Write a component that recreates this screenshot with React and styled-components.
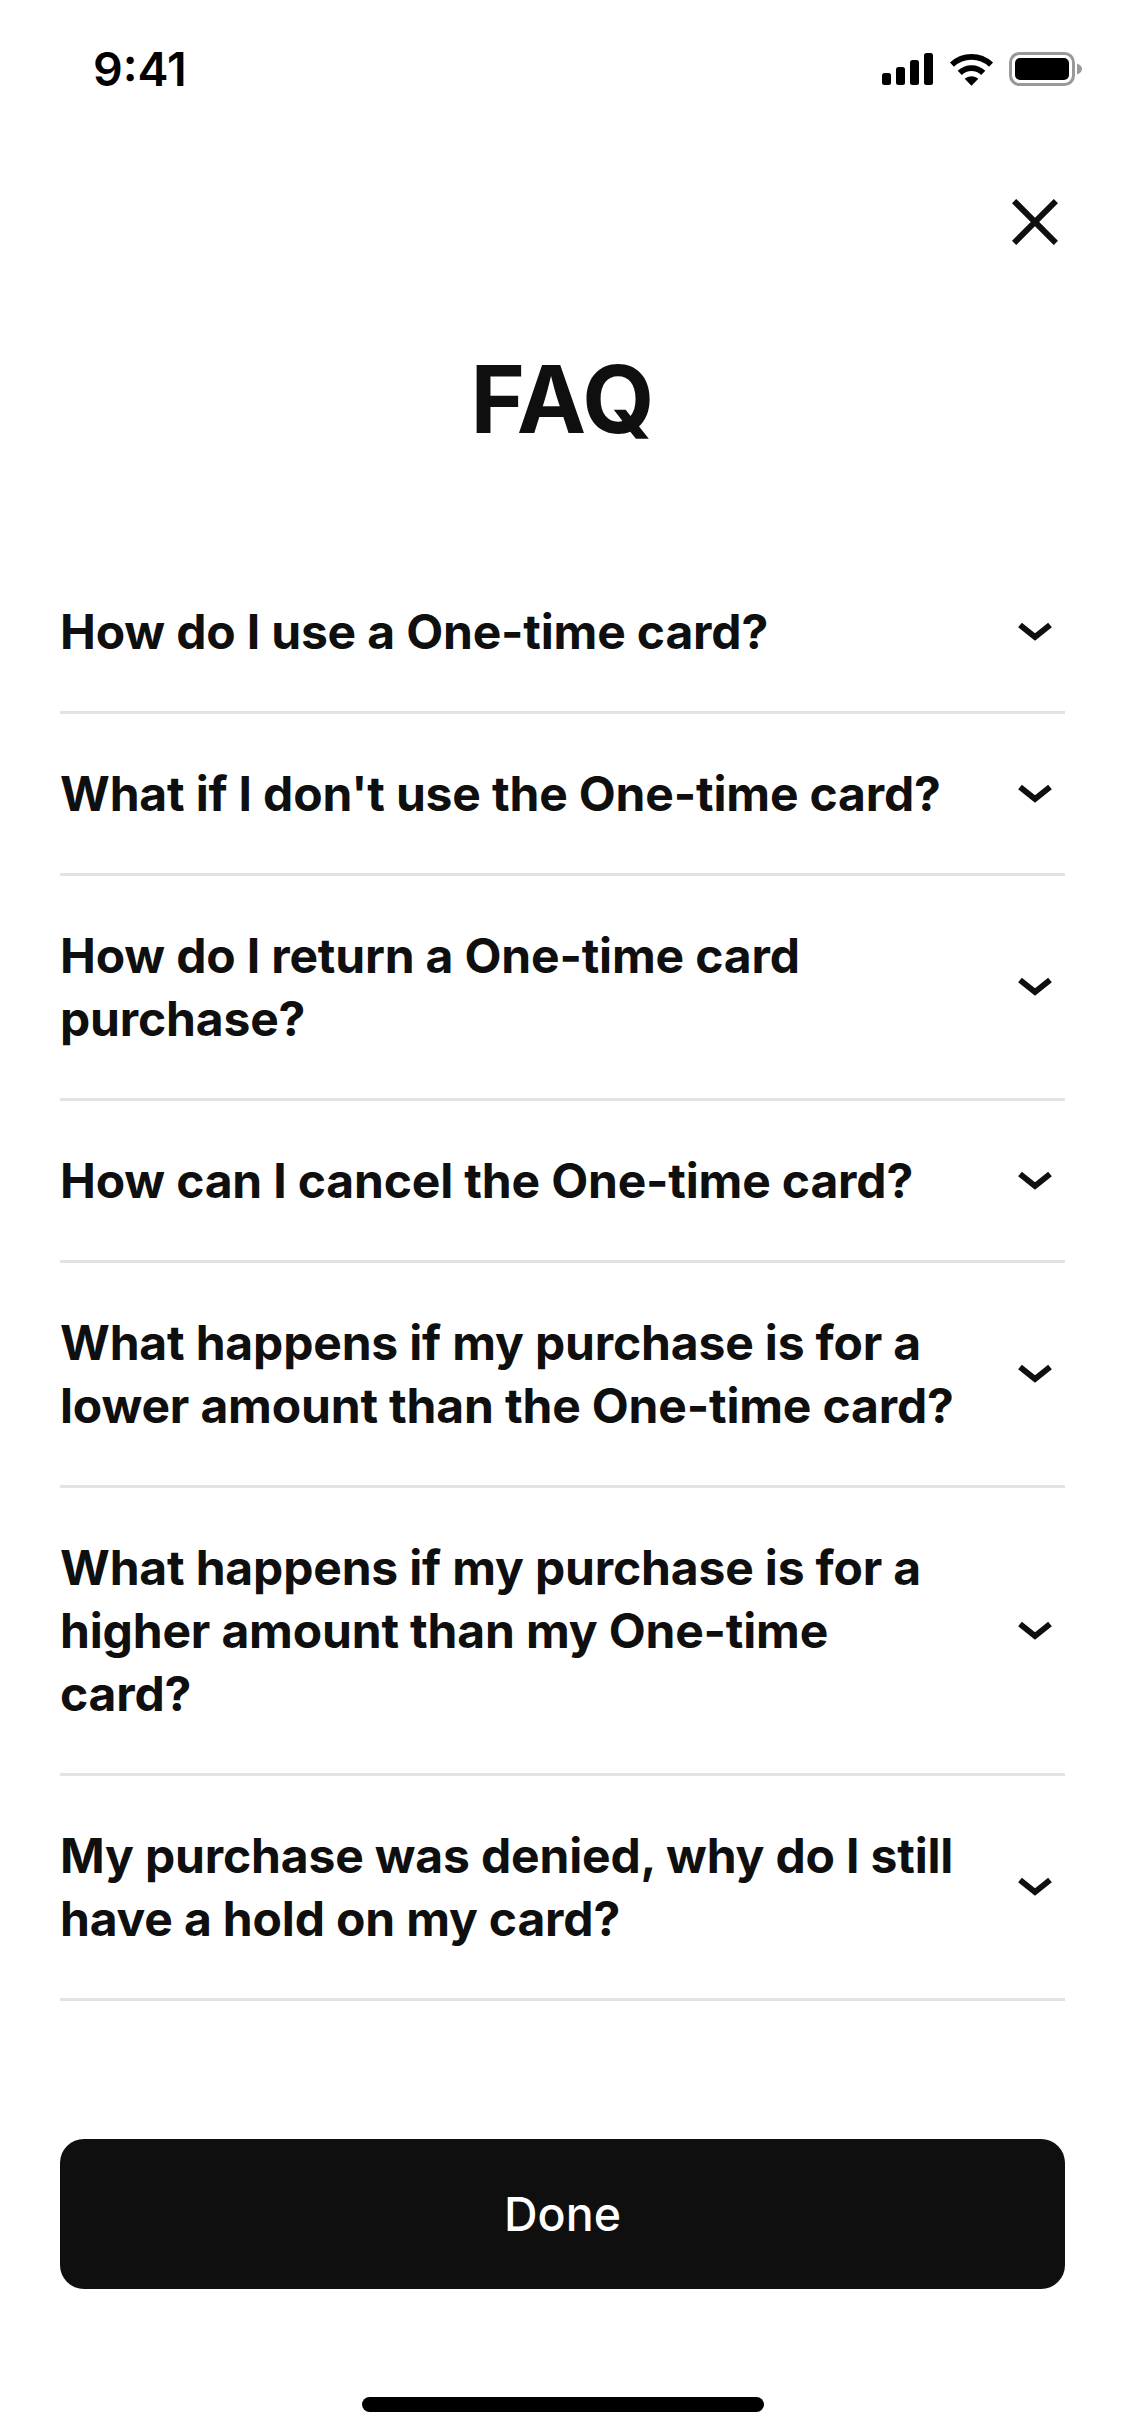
import React from "react";
import styled, { createGlobalStyle } from "styled-components";

const Global = createGlobalStyle`
  html, body { margin: 0; padding: 0; background: #fff; }
  * { box-sizing: border-box; }
`;

const Screen = styled.div`
  width: 1125px;
  height: 2436px;
  display: flex;
  flex-direction: column;
  background: #fff;
  color: #0f0f0f;
  font-family: Inter, "Liberation Sans", sans-serif;
  overflow: hidden;
`;

const StatusBar = styled.div`
  height: 132px;
  padding: 49px 43px 0 93px;
  display: flex;
  justify-content: space-between;
  align-items: flex-start;
`;

const Time = styled.span`
  font-size: 46.5px;
  line-height: 40px;
  font-weight: 600;
  color: #000;
`;

const StatusIcons = styled.div`
  display: flex;
  align-items: center;
  gap: 15.5px;
  height: 40px;
`;

const CloseRow = styled.div`
  display: flex;
  justify-content: flex-end;
  padding: 67px 67px 0 0;
`;

const Title = styled.h1`
  margin: 96px 0 0;
  text-align: center;
  font-size: 93px;
  line-height: 116px;
  font-weight: 700;
  color: #0f0f0f;
`;

const List = styled.div`
  margin: 95px 60px 0;
  display: flex;
  flex-direction: column;
`;

const Row = styled.div`
  display: flex;
  align-items: center;
  justify-content: space-between;
  padding: 48px 0;
  border-bottom: 3px solid #e3e3e3;
`;

const Question = styled.span`
  width: 900px;
  font-size: 48px;
  line-height: 63px;
  font-weight: 650;
  letter-spacing: -0.17px;
  color: #0f0f0f;
`;

const ChevronBox = styled.span`
  display: flex;
  margin-right: 13px;
`;

const DoneButton = styled.button`
  margin: 138px 60px 0;
  height: 150px;
  border: 0;
  border-radius: 24px;
  background: #0f0f0f;
  color: #fff;
  font-family: inherit;
  font-size: 46.5px;
  font-weight: 450;
`;

const HomeBar = styled.div`
  width: 402px;
  height: 15px;
  margin: 108px auto 0;
  border-radius: 8px;
  background: #000;
`;

const questions = [
  "How do I use a One-time card?",
  "What if I don't use the One-time card?",
  "How do I return a One-time card purchase?",
  "How can I cancel the One-time card?",
  "What happens if my purchase is for a lower amount than the One-time card?",
  "What happens if my purchase is for a higher amount than my One-time card?",
  "My purchase was denied, why do I still have a hold on my card?",
];

const Signal = () => (
  <svg width="51" height="32" viewBox="0 0 51 32" fill="#000">
    <rect x="0" y="20" width="9" height="12" rx="2.5" />
    <rect x="14" y="14" width="9" height="18" rx="2.5" />
    <rect x="28" y="7" width="9" height="25" rx="2.5" />
    <rect x="42" y="0" width="9" height="32" rx="2.5" />
  </svg>
);

const Wifi = () => (
  <svg width="45" height="33" viewBox="0 0 46 33" fill="none" stroke="#000">
    <path d="M3 11.5C14.5 1 31.5 1 43 11.5" strokeWidth="6" />
    <path d="M11 20C17.5 13.5 28.5 13.5 35 20" strokeWidth="6" />
    <path d="M16 26 23 33 30 26C26 22.5 20 22.5 16 26Z" fill="#000" stroke="none" />
  </svg>
);

const Battery = () => (
  <svg width="73" height="34" viewBox="0 0 73 34">
    <rect x="1.5" y="1.5" width="63" height="31" rx="9" fill="none" stroke="#999" strokeWidth="3" />
    <rect x="6" y="6" width="54" height="22" rx="5" fill="#000" />
    <path d="M68 11.5C71 12.5 73 14.5 73 17S71 21.5 68 22.5Z" fill="#999" />
  </svg>
);

const CloseIcon = () => (
  <svg width="46" height="46" viewBox="0 0 46 46" fill="none" stroke="#0f0f0f" strokeWidth="6" strokeLinecap="square">
    <path d="M4.2 4.2 41.8 41.8M41.8 4.2 4.2 41.8" />
  </svg>
);

const Chevron = () => (
  <svg width="34" height="20" viewBox="0 0 34 20" fill="none" stroke="#0f0f0f" strokeWidth="6">
    <path d="M2 3 17 15 32 3" />
  </svg>
);

export default function App() {
  return (
    <Screen>
      <Global />
      <StatusBar>
        <Time>9:41</Time>
        <StatusIcons>
          <Signal />
          <Wifi />
          <Battery />
        </StatusIcons>
      </StatusBar>
      <CloseRow>
        <CloseIcon />
      </CloseRow>
      <Title>FAQ</Title>
      <List>
        {questions.map((q) => (
          <Row key={q}>
            <Question>{q}</Question>
            <ChevronBox>
              <Chevron />
            </ChevronBox>
          </Row>
        ))}
      </List>
      <DoneButton>Done</DoneButton>
      <HomeBar />
    </Screen>
  );
}
